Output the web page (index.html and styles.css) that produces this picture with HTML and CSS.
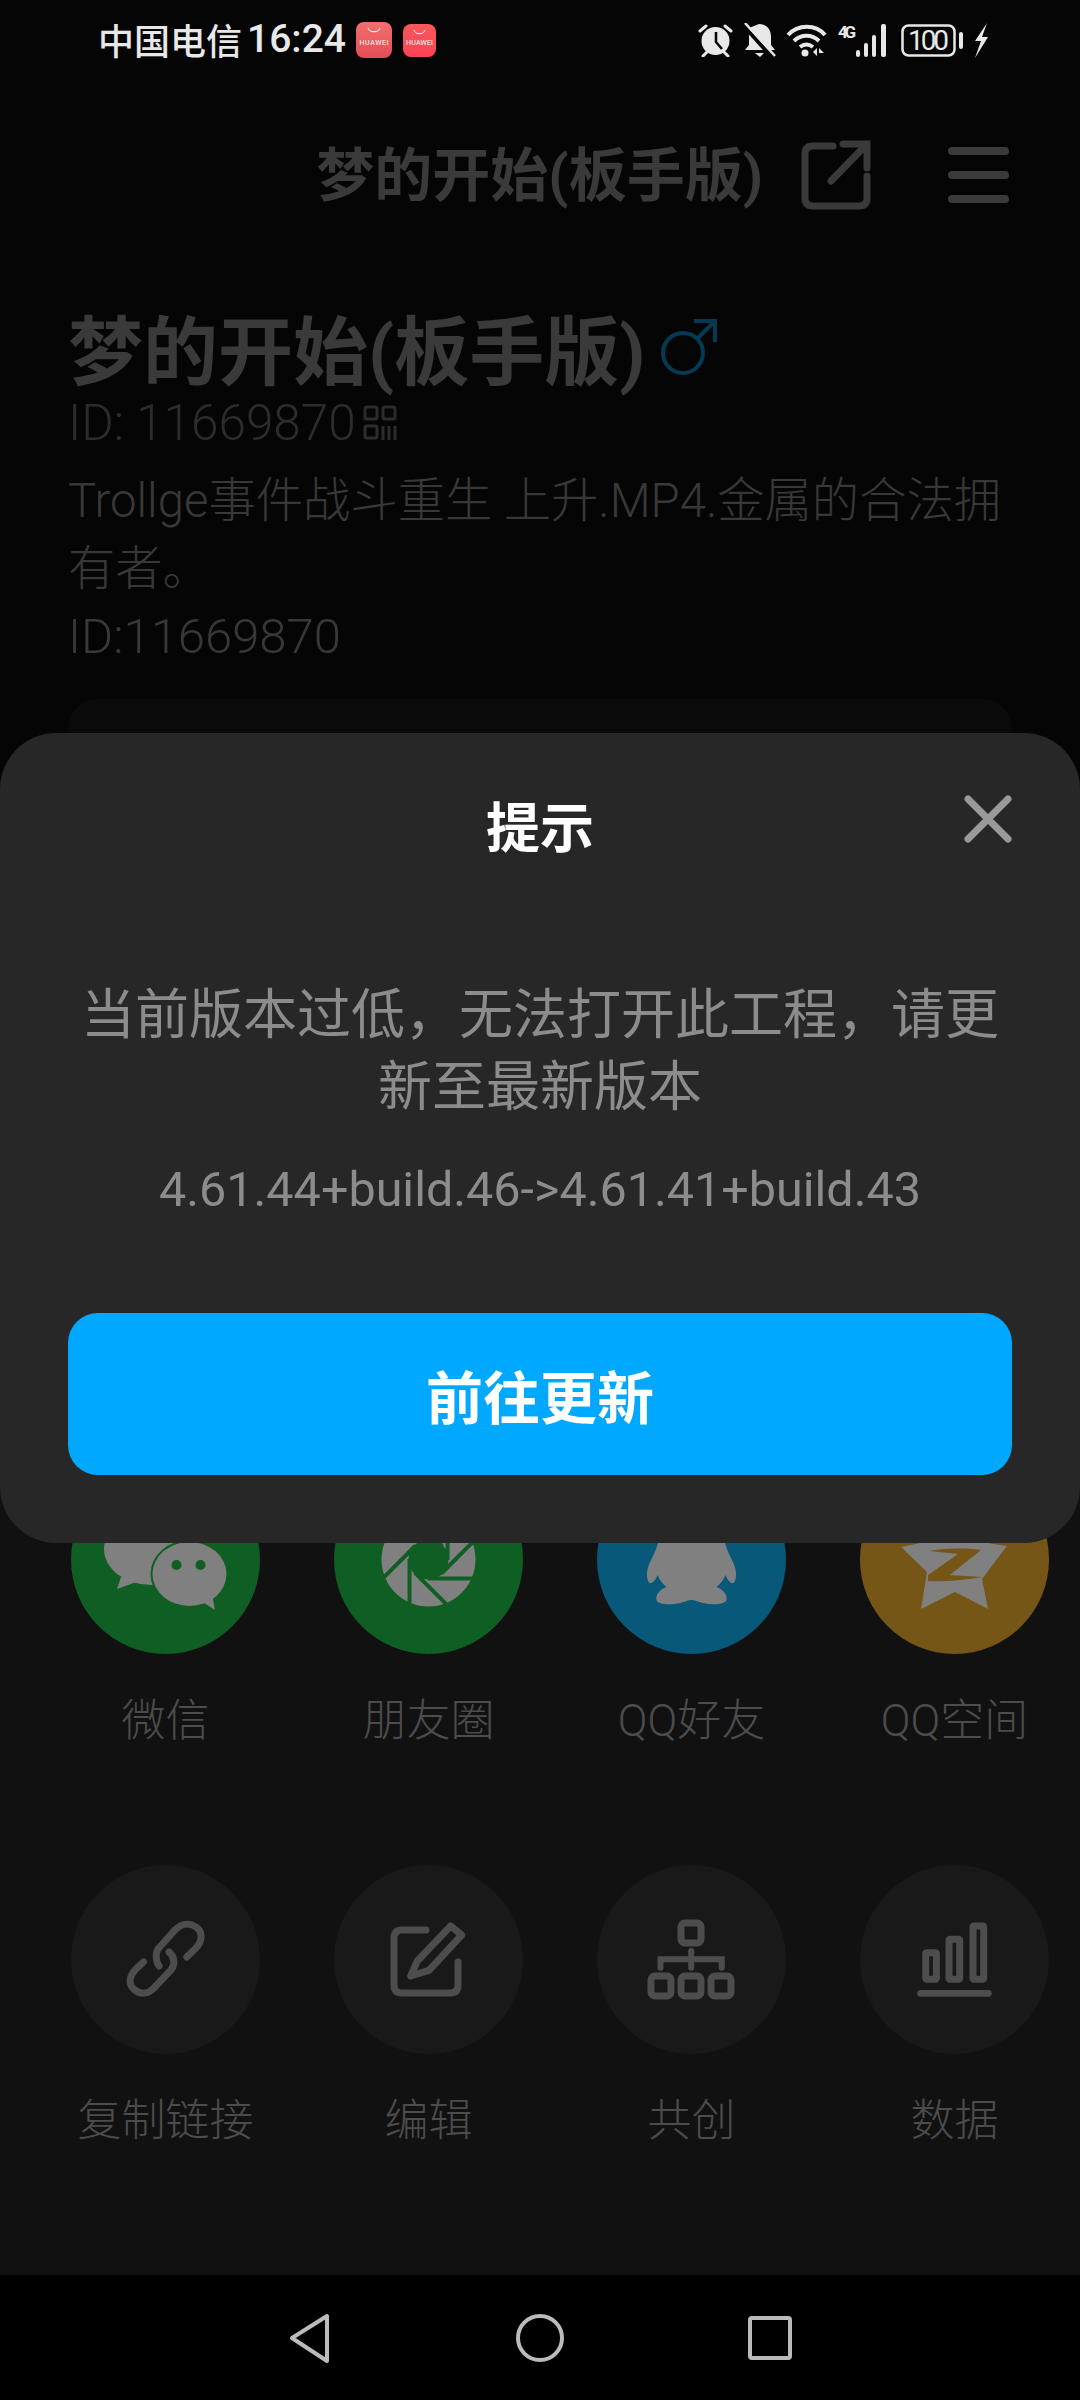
FILE: index.html
```html
<!DOCTYPE html>
<html lang="zh-CN">
<head>
    <meta charset="UTF-8">
    <meta name="viewport" content="width=device-width, initial-scale=1.0">
    <title>梦的开始(板手版)</title>
    <link rel="stylesheet" href="styles.css">
</head>
<body>
<div class="screen">
    <!-- status bar -->
    <div class="status-bar">
        <span class="status-text">中国电信</span>
        <span class="status-text status-time">16:24</span>
        <svg class="app-badge" width="36" height="36" viewBox="0 0 36 36">
            <defs>
                <linearGradient id="badgeA" x1="0" y1="0" x2="0" y2="1">
                    <stop offset="0" stop-color="#f26f6f"/>
                    <stop offset="1" stop-color="#e24e55"/>
                </linearGradient>
            </defs>
            <rect width="36" height="36" rx="8" fill="url(#badgeA)"/>
            <path d="M12 6c1 5 11 5 12 0" fill="none" stroke="#fff" stroke-width="1"/>
            <text x="18" y="23" class="badge-text" text-anchor="middle" textLength="29">HUAWEI</text>
        </svg>
        <svg class="app-badge app-badge-2" width="33" height="33" viewBox="0 0 33 33">
            <defs>
                <linearGradient id="badgeB" x1="0" y1="0" x2="0" y2="1">
                    <stop offset="0" stop-color="#f8585c"/>
                    <stop offset="1" stop-color="#fd4254"/>
                </linearGradient>
            </defs>
            <rect width="33" height="33" rx="8" fill="url(#badgeB)"/>
            <path d="M11 6c1 5 10 5 11 0" fill="none" stroke="#fff" stroke-width="1"/>
            <text x="16.500" y="21" class="badge-text" text-anchor="middle" textLength="27">HUAWEI</text>
        </svg>
        <div class="status-icons">
            <!-- alarm -->
            <svg width="35" height="34" viewBox="0 0 35 34">
                <circle cx="17.500" cy="18" r="14" fill="#e8e8e8"/>
                <path d="M18 9v10l6 7" fill="none" stroke="#050505" stroke-width="2.500"/>
                <path d="M2 8l6-5M33 8l-6-5M5 33l4-4M30 33l-4-4" stroke="#e8e8e8" stroke-width="3" stroke-linecap="round"/>
            </svg>
            <!-- muted bell -->
            <svg width="32" height="34" viewBox="0 0 32 34">
                <path d="M15 1c8 0 12 6 12 13v8l4 5H1l4-5V5z" fill="#e8e8e8"/>
                <path d="M11 30h9l-4 4z" fill="#e8e8e8"/>
                <path d="M0 3l28 31" stroke="#050505" stroke-width="4"/>
                <path d="M1 0l30 33" stroke="#e8e8e8" stroke-width="2.500"/>
            </svg>
            <!-- wifi -->
            <svg width="41" height="33" viewBox="0 0 41 33">
                <path d="M2 11c10-11 28-11 37 0M8 17c7-7 18-7 25 0M14 23c4-3 9-3 13 0" fill="none" stroke="#e8e8e8" stroke-width="4"/>
                <circle cx="19" cy="29" r="3.500" fill="#e8e8e8"/>
                <path d="M27 28l4-4v8zM33 24l5 5h-5z" fill="#e8e8e8"/>
            </svg>
            <!-- signal -->
            <svg class="signal-icon" width="53" height="33" viewBox="0 0 53 33">
                <text x="0" y="14" class="net-text" textLength="18">4G</text>
                <rect x="18" y="26" width="4" height="7" rx="2" fill="#e8e8e8"/>
                <rect x="26" y="19" width="4" height="14" rx="2" fill="#e8e8e8"/>
                <rect x="34" y="11" width="4" height="22" rx="2" fill="#e8e8e8"/>
                <rect x="43" y="0" width="5" height="33" rx="2" fill="#e8e8e8"/>
            </svg>
            <!-- battery -->
            <svg width="62" height="33" viewBox="0 0 62 33">
                <rect x="1.500" y="1.500" width="52" height="30" rx="6" fill="none" stroke="#e8e8e8" stroke-width="2.500"/>
                <text x="7" y="26" class="battery-text" textLength="41">100</text>
                <rect x="58" y="8" width="4" height="17" rx="2" fill="#e8e8e8"/>
            </svg>
            <!-- charging -->
            <svg width="14" height="35" viewBox="0 0 14 35">
                <path d="M13 0L1 18h6L1 35l13-21H8l5-14z" fill="#e8e8e8"/>
            </svg>
        </div>
    </div>

    <!-- top bar -->
    <div class="topbar">
        <span class="topbar-title">梦的开始(板手版)</span>
        <svg class="topbar-share" width="70" height="70" viewBox="0 0 70 70">
            <path d="M32 6H12Q4 6 4 14v44q0 8 8 8h46q8 0 8-8V36" fill="none" stroke="#3a3a3a" stroke-width="7" stroke-linecap="round"/>
            <path d="M30 41L64 6M42 4h24v24" fill="none" stroke="#3a3a3a" stroke-width="7" stroke-linecap="round"/>
        </svg>
        <div class="topbar-menu">
            <span></span>
            <span></span>
            <span></span>
        </div>
    </div>

    <!-- profile -->
    <div class="profile">
        <div class="profile-name">
            <h1>梦的开始(板手版)</h1>
            <svg class="profile-gender" width="58" height="58" viewBox="0 0 58 58">
                <circle cx="23" cy="35" r="20" fill="none" stroke="#043a55" stroke-width="4"/>
                <path d="M37 21L55 3M34 3h21v21" fill="none" stroke="#043a55" stroke-width="4"/>
            </svg>
        </div>
        <div class="profile-id">
            <span>ID: 11669870</span>
            <svg width="34" height="36" viewBox="0 0 34 36">
                <g fill="none" stroke="#2c2c2c" stroke-width="3">
                    <rect x="2" y="2" width="12" height="12" rx="2"/>
                    <rect x="20" y="2" width="12" height="12" rx="2"/>
                    <rect x="2" y="21" width="12" height="12" rx="2"/>
                    <path d="M20 21v14M26 21v14M32 21v14"/>
                </g>
            </svg>
        </div>
        <p class="profile-desc">Trollge事件战斗重生 上升.MP4.金属的合法拥有者。<br><span class="profile-desc-id">ID:11669870</span></p>
    </div>

    <div class="card"></div>

    <!-- share panel -->
    <div class="share">
        <div class="share-item">
            <svg class="share-icon icon-wechat" viewBox="0 0 189 189">
                <ellipse cx="80" cy="84" rx="47" ry="36" fill="#808080"/>
                <path d="M50 112l-4 12 22-8z" fill="#808080"/>
                <ellipse cx="118.500" cy="109" rx="39" ry="34" fill="#0f5e23"/>
                <ellipse cx="118.500" cy="109" rx="37" ry="32" fill="#808080"/>
                <path d="M130 136l14 9-3-16z" fill="#808080"/>
                <circle cx="105.500" cy="100" r="5" fill="#0f5e23"/>
                <circle cx="129.500" cy="100" r="5" fill="#0f5e23"/>
            </svg>
            <span class="share-label">微信</span>
        </div>
        <div class="share-item">
            <svg class="share-icon icon-wechat" viewBox="0 0 189 189">
                <circle cx="94.500" cy="94.500" r="47" fill="#808080"/>
                <g stroke="#0f5e23" stroke-width="4">
                    <path d="M75.500 94v50"/>
                    <path d="M75.500 94v50" transform="rotate(-45 94.500 94.500)"/>
                    <path d="M75.500 94v50" transform="rotate(-90 94.500 94.500)"/>
                    <path d="M75.500 94v50" transform="rotate(-135 94.500 94.500)"/>
                    <path d="M75.500 94v50" transform="rotate(180 94.500 94.500)"/>
                    <path d="M75.500 94v50" transform="rotate(135 94.500 94.500)"/>
                    <path d="M75.500 94v50" transform="rotate(90 94.500 94.500)"/>
                    <path d="M75.500 94v50" transform="rotate(45 94.500 94.500)"/>
                </g>
                <circle cx="94.500" cy="94.500" r="20" fill="#0f5e23"/>
            </svg>
            <span class="share-label">朋友圈</span>
        </div>
        <div class="share-item">
            <svg class="share-icon icon-qq" viewBox="0 0 189 189">
                <path d="M94.500 40c-20 0-31 14-33 36-2 8-4 12-8 20-4 8-5 18-1 22 3 1 6-3 8-8 2 5 5 9 9 12-8 3-11 9-10 13 2 5 14 5 24 3 4-1 7-3 11-3s7 2 11 3c10 2 22 2 24-3 1-4-2-10-10-13 4-3 7-7 9-12 2 5 5 9 8 8 4-4 3-14-1-22-4-8-6-12-8-20-2-22-13-36-33-36z" fill="#808080"/>
            </svg>
            <span class="share-label">QQ好友</span>
        </div>
        <div class="share-item">
            <svg class="share-icon icon-qzone" viewBox="0 0 189 189">
                <path d="M94 42l14 33 39 6-25 33 6 30-33-17-34 17 6-37-26-25 34-7z" fill="#808080"/>
                <path d="M69 86c18-3 36-3 52-1l-31 25 32 2c-17 3-36 5-54 4v-6l30-21z" fill="#755616"/>
            </svg>
            <span class="share-label">QQ空间</span>
        </div>

        <div class="share-item">
            <svg class="share-icon icon-tool" viewBox="0 0 189 189">
                <g fill="none" stroke="#4d4d4d" stroke-width="7" stroke-linecap="round">
                    <path d="M115.800 92L124 84C133 75 131 66 125 62C118 57 110 59 104 65L87 84C84 89 85 97 88 101"/>
                    <path d="M72.500 97L64 105C57 113 58 121 64 125C70 130 77 129 83 123L100 105C105 99 103 91 98 87"/>
                </g>
            </svg>
            <span class="share-label">复制链接</span>
        </div>
        <div class="share-item">
            <svg class="share-icon icon-tool" viewBox="0 0 189 189">
                <path d="M92 65H68Q60 65 60 73V120Q60 128 68 128H116Q124 128 124 120V97" fill="none" stroke="#4d4d4d" stroke-width="7" stroke-linecap="round"/>
                <path d="M76.700 111L83.300 96L116.700 61L127.700 70L95 105.300z" fill="none" stroke="#4d4d4d" stroke-width="7" stroke-linejoin="round"/>
            </svg>
            <span class="share-label">编辑</span>
        </div>
        <div class="share-item">
            <svg class="share-icon icon-tool" viewBox="0 0 189 189">
                <g fill="none" stroke="#4d4d4d" stroke-width="7">
                    <rect x="84" y="58" width="20" height="20" rx="4"/>
                    <rect x="54" y="111" width="20" height="20" rx="4"/>
                    <rect x="84" y="111" width="20" height="20" rx="4"/>
                    <rect x="114" y="111" width="20" height="20" rx="4"/>
                    <path d="M63.500 102.700V94.300H124.800V102.700M94.200 86V102.700" stroke-width="6" stroke-linecap="round"/>
                </g>
            </svg>
            <span class="share-label">共创</span>
        </div>
        <div class="share-item">
            <svg class="share-icon icon-tool" viewBox="0 0 189 189">
                <g fill="none" stroke="#4d4d4d" stroke-width="7">
                    <rect x="65.700" y="87.700" width="10.700" height="26.600" rx="1"/>
                    <rect x="89" y="74.300" width="10.700" height="40" rx="1"/>
                    <rect x="113" y="61" width="10.700" height="53.300" rx="1"/>
                </g>
                <rect x="57.300" y="125" width="74.400" height="6.700" rx="3.300" fill="#4d4d4d"/>
            </svg>
            <span class="share-label">数据</span>
        </div>
    </div>

    <!-- android nav -->
    <div class="navbar">
        <svg width="60" height="60" viewBox="0 0 60 60">
            <path d="M47 8v45L12 30z" fill="none" stroke="#bbb" stroke-width="4" stroke-linejoin="round"/>
        </svg>
        <svg width="60" height="60" viewBox="0 0 60 60">
            <circle cx="30" cy="30" r="22" fill="none" stroke="#bbb" stroke-width="4"/>
        </svg>
        <svg width="60" height="60" viewBox="0 0 60 60">
            <rect x="10" y="10" width="40" height="40" rx="2" fill="none" stroke="#bbb" stroke-width="4"/>
        </svg>
    </div>

    <!-- update dialog -->
    <div class="dialog">
        <svg class="dialog-close" width="48" height="48" viewBox="0 0 48 48">
            <path d="M4 4l40 40M44 4L4 44" stroke="#999" stroke-width="7" stroke-linecap="round"/>
        </svg>
        <h2 class="dialog-title">提示</h2>
        <p class="dialog-msg">当前版本过低，无法打开此工程，请更新至最新版本</p>
        <p class="dialog-version">4.61.44+build.46-&gt;4.61.41+build.43</p>
        <button class="dialog-btn">前往更新</button>
    </div>
</div>
</body>
</html>
```

FILE: styles.css
```css
* {
    box-sizing: border-box;
}
body {
    margin: 0;
    background-color: #000;
    font-family: Roboto, "Noto Sans CJK SC", sans-serif;
}
.screen {
    position: relative;
    display: flex;
    flex-direction: column;
    width: 1080px;
    height: 2400px;
    overflow: hidden;
    background-color: #050505;
}

/* status bar */
.status-bar {
    display: flex;
    align-items: center;
    height: 80px;
    padding: 0 92px 0 98px;
    flex-shrink: 0;
}
.status-text {
    margin-bottom: 2px;
    color: #e8e8e8;
    font-size: 36px;
    font-weight: 500;
}
.status-time {
    margin-left: 5px;
    font-size: 39px;
}
.app-badge {
    margin-left: 10px;
}
.app-badge-2 {
    margin-left: 11px;
}
.badge-text {
    fill: #fff;
    font-size: 7px;
}
.status-icons {
    display: flex;
    align-items: center;
    gap: 10.600px;
    margin-left: auto;
}
.signal-icon {
    overflow: visible;
}
.net-text {
    fill: #e8e8e8;
    font-size: 17px;
    font-weight: 700;
}
.battery-text {
    fill: #e8e8e8;
    font-size: 28px;
}

/* top bar */
.topbar {
    display: flex;
    align-items: center;
    justify-content: flex-end;
    height: 190px;
    padding-right: 71px;
    flex-shrink: 0;
}
.topbar-title {
    margin-bottom: 8px;
    color: #3a3a3a;
    font-size: 58px;
    font-weight: 700;
}
.topbar-share {
    margin-left: 38px;
}
.topbar-menu {
    display: flex;
    flex-direction: column;
    gap: 16px;
    width: 61px;
    margin-left: 77px;
}
.topbar-menu span {
    height: 8px;
    border-radius: 4px;
    background-color: #3a3a3a;
}

/* profile */
.profile {
    padding: 40px 68px 0;
    flex-shrink: 0;
}
.profile-name {
    display: flex;
    align-items: center;
    gap: 14px;
    height: 80px;
}
.profile-name h1 {
    margin: 0 0 8px;
    color: #3a3a3a;
    font-size: 75px;
    font-weight: 700;
    white-space: nowrap;
}
.profile-gender {
    margin-bottom: 6px;
}
.profile-id {
    display: flex;
    align-items: center;
    gap: 7px;
    height: 46px;
    margin-top: 10px;
    color: #2c2c2c;
    font-size: 49.500px;
    font-weight: 300;
}
.profile-desc {
    margin: 21px 0 0;
    color: #383838;
    font-size: 47.300px;
    font-weight: 300;
    line-height: 68px;
}
.profile-desc-id {
    font-size: 49px;
}

.card {
    height: 720px;
    margin: 28px 68px 0;
    border-radius: 30px;
    background-color: #0a0a0a;
    flex-shrink: 0;
}

/* share panel */
.share {
    display: grid;
    grid-template-columns: repeat(4, 189px);
    column-gap: 74px;
    row-gap: 114px;
    align-content: start;
    flex: 1;
    margin-top: 21px;
    padding: 25px 0 0 71px;
    background-color: #111;
}
.share-item {
    display: flex;
    flex-direction: column;
    align-items: center;
}
.share-icon {
    width: 189px;
    height: 189px;
    border-radius: 50%;
}
.icon-wechat {
    background-color: #0f5e23;
}
.icon-qq {
    background-color: #08587a;
}
.icon-qzone {
    background-color: #755616;
}
.icon-tool {
    background-color: #191919;
}
.share-label {
    margin-top: 37px;
    color: #4c4c4c;
    font-size: 44px;
    font-weight: 300;
    line-height: 60px;
    white-space: nowrap;
}

/* nav bar */
.navbar {
    display: flex;
    align-items: center;
    justify-content: center;
    gap: 170px;
    height: 125px;
    background-color: #000;
    flex-shrink: 0;
}

/* dialog */
.dialog {
    position: absolute;
    top: 733px;
    left: 0;
    width: 1080px;
    height: 810px;
    padding: 62px 68px 0;
    border-radius: 56px;
    background-color: #272727;
    text-align: center;
}
.dialog-close {
    position: absolute;
    top: 62px;
    right: 68px;
}
.dialog-title {
    margin: 0;
    color: #fff;
    font-size: 54px;
    font-weight: 700;
    line-height: 70px;
}
.dialog-msg {
    margin: 115px 0 0;
    color: #8c8c8c;
    font-size: 54px;
    font-weight: 400;
    line-height: 72px;
}
.dialog-version {
    margin: 36px 0 0;
    color: #8c8c8c;
    font-size: 48.500px;
    line-height: 60px;
}
.dialog-btn {
    display: block;
    width: 100%;
    height: 162px;
    margin-top: 93px;
    border: none;
    border-radius: 30px;
    background-color: #00a9ff;
    color: #fff;
    font-family: inherit;
    font-size: 57px;
    font-weight: 700;
}
```
